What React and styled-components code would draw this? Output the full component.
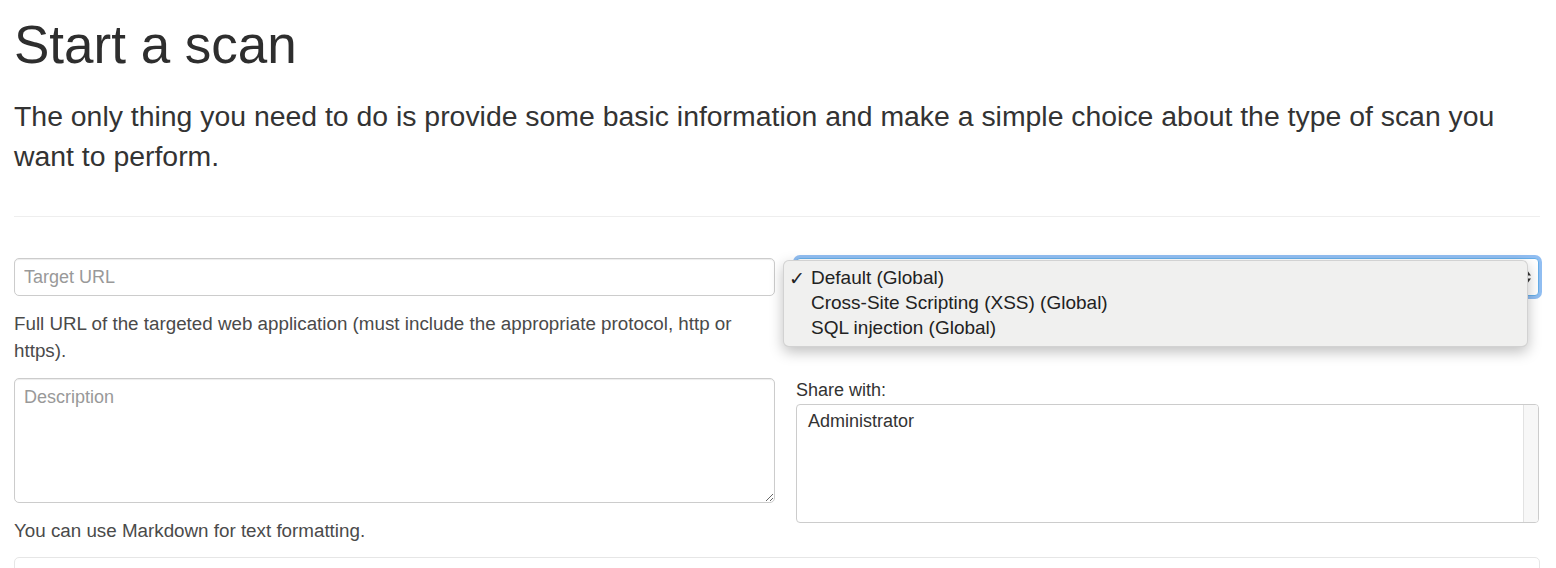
import React from "react";
import styled, { createGlobalStyle } from "styled-components";

const GlobalStyle = createGlobalStyle`
  html, body {
    margin: 0;
    padding: 0;
    background: #fff;
    font-family: "Liberation Sans", Arial, sans-serif;
    color: #333;
    overflow: hidden;
  }
`;

const scanTypes = [
  { name: "Default (Global)", checked: true },
  { name: "Cross-Site Scripting (XSS) (Global)" },
  { name: "SQL injection (Global)" },
];

const App = () => {
  return (
    <>
      <GlobalStyle />
      <Container>
        <Title>Start a scan</Title>
        <Lead>
          The only thing you need to do is provide some basic information and
          make a simple choice about the type of scan you want to perform.
        </Lead>
        <Divider />
        <FormRow>
          <Column>
            <TextInput placeholder="Target URL" />
            <HelpText>
              Full URL of the targeted web application (must include the
              appropriate protocol, http or https).
            </HelpText>
            <TextArea placeholder="Description" />
            <HelpText>You can use Markdown for text formatting.</HelpText>
          </Column>
          <Column>
            <SelectBox>
              <SelectArrows width="10" height="16" viewBox="0 0 10 16">
                <path d="M5 1 L9 6.5 H1 Z" fill="#333" />
                <path d="M5 15 L9 9.5 H1 Z" fill="#333" />
              </SelectArrows>
              <Menu>
                {scanTypes.map((t) => (
                  <MenuItem key={t.name}>
                    <Check>{t.checked ? "✓" : ""}</Check>
                    {t.name}
                  </MenuItem>
                ))}
              </Menu>
            </SelectBox>
            <Label>Share with:</Label>
            <ListBox>
              <ListOptions>
                <ListOption>Administrator</ListOption>
              </ListOptions>
              <ScrollTrack />
            </ListBox>
          </Column>
        </FormRow>
        <BottomPanel />
      </Container>
    </>
  );
};

export default App;

const Container = styled.div`
  padding: 16px 16px 0 14px;
`;

const Title = styled.h1`
  margin: 0;
  font-size: 53px;
  line-height: 58px;
  font-weight: 400;
  color: #2e2e2e;
`;

const Lead = styled.p`
  margin: 22px 0 0;
  font-size: 28.4px;
  line-height: 40px;
  font-weight: 300;
  color: #333;
  max-width: 1510px;
`;

const Divider = styled.hr`
  margin: 40px 0 0;
  border: 0;
  border-top: 1px solid #eee;
`;

const FormRow = styled.div`
  display: grid;
  grid-template-columns: 761px 1fr;
  column-gap: 21px;
  margin-top: 41px;
`;

const Column = styled.div`
  display: flex;
  flex-direction: column;
  min-width: 0;
`;

const fieldBase = `
  box-sizing: border-box;
  width: 100%;
  border: 1px solid #ccc;
  border-radius: 5px;
  background: #fff;
  box-shadow: inset 0 1px 1px rgba(0, 0, 0, 0.075);
  font-family: "Liberation Sans", Arial, sans-serif;
  font-size: 18px;
  color: #333;
  outline: none;
  &::placeholder {
    color: #999;
  }
`;

const TextInput = styled.input`
  ${fieldBase}
  height: 38px;
  padding: 0 9px;
`;

const TextArea = styled.textarea`
  ${fieldBase}
  display: block;
  height: 125px;
  margin-top: 14px;
  padding: 8px 9px;
  resize: vertical;
`;

const HelpText = styled.p`
  margin: 14px 0 0;
  font-size: 18.8px;
  line-height: 27px;
  color: #4a4a4a;
`;

const SelectBox = styled.div`
  position: relative;
  box-sizing: border-box;
  height: 38px;
  width: 743px;
  border: 1px solid #66afe9;
  border-radius: 4px;
  background: #fff;
  box-shadow: 0 0 0 3px rgba(108, 168, 238, 0.75);
`;

const SelectArrows = styled.svg`
  position: absolute;
  right: 6px;
  top: 10px;
`;

const Menu = styled.ul`
  position: absolute;
  left: -14px;
  top: 1px;
  width: 745px;
  box-sizing: border-box;
  margin: 0;
  padding: 4px 0 6px;
  list-style: none;
  background: #f0f0ef;
  border: 1px solid rgba(0, 0, 0, 0.12);
  border-radius: 6px;
  box-shadow: 0 5px 14px rgba(0, 0, 0, 0.25);
  z-index: 2;
`;

const MenuItem = styled.li`
  display: flex;
  align-items: center;
  height: 25px;
  padding-left: 5px;
  font-family: "Liberation Sans", Arial, sans-serif;
  font-size: 19px;
  color: #222;
`;

const Check = styled.span`
  display: inline-block;
  width: 22px;
  font-family: "DejaVu Sans", sans-serif;
  font-size: 19px;
  font-weight: 700;
  color: #222;
`;

const Label = styled.label`
  display: block;
  margin-top: 81px;
  font-size: 18px;
  line-height: 27px;
  color: #333;
`;

const ListBox = styled.div`
  display: flex;
  box-sizing: border-box;
  height: 119px;
  width: 743px;
  border: 1px solid #ccc;
  border-radius: 4px;
  background: #fff;
  overflow: hidden;
`;

const ListOptions = styled.div`
  flex: 1;
  padding: 4px 11px;
`;

const ListOption = styled.div`
  font-size: 18px;
  line-height: 25px;
  color: #333;
`;

const ScrollTrack = styled.div`
  width: 14px;
  background: #f7f7f7;
  border-left: 1px solid #e2e2e2;
`;

const BottomPanel = styled.div`
  margin-top: 13px;
  height: 60px;
  border: 1px solid #e6e6e6;
  border-radius: 5px;
`;
